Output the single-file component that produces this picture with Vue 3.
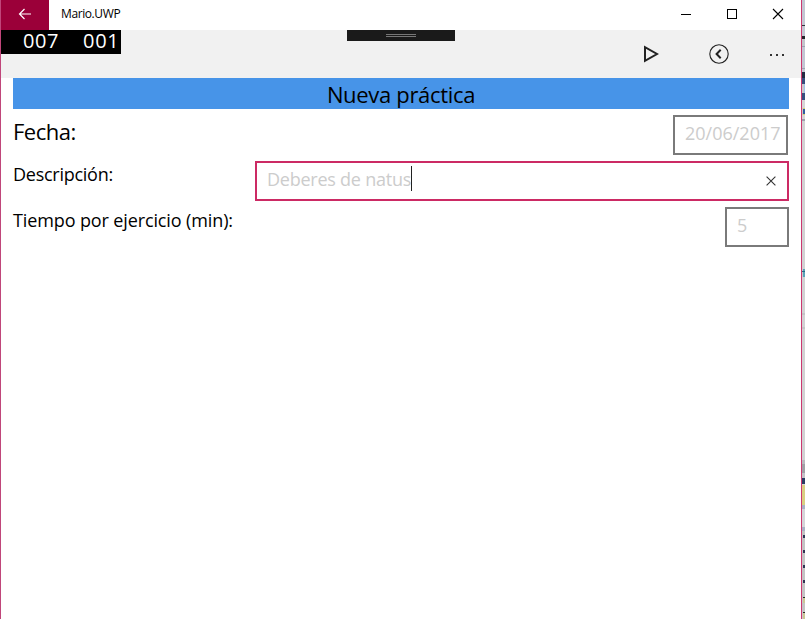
<script setup>
import { ref } from 'vue'

const date = ref('20/06/2017')
const description = ref('Deberes de natus')
const minutes = ref('5')

// Slices of the window lying behind this one: height in px, colour and,
// for marks that do not fill the strip, their left inset in px
const slices = [
  [25, '#c3c6d2'], [1, '#33363c'], [10, '#c3c6d2'], [3, '#24262b'], [7, '#c3c6cc'],
  [1, '#9ea2b0'], [21, '#c3c7d3'], [1, '#9ea2b0'], [3, '#c3c7d3'], [6, '#222c43'],
  [6, '#364e7c'], [9, '#9fc3e8', 2], [7, '#37507f'], [8, '#d6d6d6'], [1, '#d8cf74', 1],
  [5, '#315f9f', 1], [1, '#d8cf74', 1], [4, '#d6d6d6'], [2, '#9da1ad'], [148, '#d2d2d3'],
  [2, '#5aa3b8', 1], [1, '#286b84'], [5, '#5aa3b8', 1], [36, '#d2d2d3'], [2, '#c4c4c6'],
  [12, '#d2d2d3'], [2, '#c4c4c6'], [131, '#d2d2d3'], [4, '#b9b9bd'], [9, '#a0a0a5'],
  [5, '#c3c3c7'], [6, '#2a3c62'], [1, '#d5d5d8'], [20, '#d9cf82'], [4, '#aab0c4'],
  [18, '#d5d5d8'], [4, '#aab0c4'], [4, '#c4c4c4'], [3, '#303554', 1], [12, '#c4c4c4'],
  [3, '#303554', 1], [12, '#c4c4c4'], [3, '#303554', 1], [12, '#c4c4c4'], [3, '#303554', 1],
  [14, '#c4c4c4'], [1, '#292929', 1], [5, '#cbc795', 1], [9, '#c4c4c4'], [1, '#292929', 1],
  [6, '#cbc795', 1],
]
</script>

<template>
  <div class="screen">
    <main class="window">
      <header class="titlebar">
        <button class="back" aria-label="Atrás">
          <svg width="14" height="12" viewBox="0 0 14 12"><path d="M13 6H1.5M6.5 1 1.5 6l5 5" /></svg>
        </button>
        <span class="app-name">Mario.UWP</span>
        <div class="controls">
          <svg width="12" height="12" viewBox="0 0 12 12"><path d="M1 6.5h10" /></svg>
          <svg width="12" height="12" viewBox="0 0 12 12"><path d="M1.5 1.5h9v9h-9z" /></svg>
          <svg class="smooth" width="12" height="12" viewBox="0 0 12 12"><path d="m1 1 10 10M11 1 1 11" /></svg>
        </div>
      </header>

      <nav class="commandbar">
        <div class="counter"><span>007</span><span>001</span></div>
        <div class="grip"><i></i><i></i></div>
        <div class="commands">
          <svg class="play" width="16" height="18" viewBox="0 0 16 18"><path d="M2 2.2v13.6L14 9z" /></svg>
          <svg class="previous" width="20" height="20" viewBox="0 0 20 20">
            <circle cx="10" cy="10" r="9.2" /><path d="M11.7 5.8 7.6 10l4.1 4.2" />
          </svg>
          <div class="more"><i></i><i></i><i></i></div>
        </div>
      </nav>

      <section class="page">
        <h1><span>Nueva práctica</span></h1>
        <div class="row">
          <span class="label large">Fecha:</span>
          <div class="field date"><span>{{ date }}</span></div>
        </div>
        <div class="row">
          <span class="label desc">Descripción:</span>
          <div class="field description">
            <span>{{ description }}</span><i class="caret"></i>
            <svg width="10" height="10" viewBox="0 0 10 10"><path d="m.6.6 8.8 8.8M9.4.6.6 9.4" /></svg>
          </div>
        </div>
        <div class="row">
          <span class="label time">Tiempo por ejercicio (min):</span>
          <div class="field minutes"><span>{{ minutes }}</span></div>
        </div>
      </section>
    </main>
    <aside class="behind">
      <div
        v-for="(s, i) in slices"
        :key="i"
        :style="{ height: s[0] + 'px', background: s[1], marginLeft: (s[2] || 0) + 'px' }"
      ></div>
    </aside>
  </div>
</template>

<style>
body { background: #fff; overflow: hidden; }
</style>

<style scoped>
* { box-sizing: border-box; }
.screen {
  display: flex;
  width: 805px;
  height: 619px;
  overflow: hidden;
  font-family: "Open Sans", "Noto Sans", sans-serif;
  color: #000;
}
.window {
  width: 802px;
  flex: none;
  border-left: 1px solid #c0467a;
  border-right: 1px solid #cc3870;
  background: #fff;
}
.behind { width: 3px; height: 619px; overflow: hidden; background: #c8c8ca; }
svg { display: block; fill: none; flex: none; }

.titlebar { display: flex; height: 30px; align-items: center; }
.back {
  display: flex;
  width: 48px;
  height: 30px;
  padding: 0 0 3px;
  border: 0;
  background: #9b0039;
  align-items: center;
  justify-content: center;
}
.back svg { stroke: #fff; stroke-width: 1.2; }
.app-name { margin: -3px 0 0 12px; font-size: 12px; letter-spacing: -0.4px; }
.controls { display: flex; gap: 34px; margin: -2px 17px 0 auto; }
.controls svg { stroke: #000; stroke-width: 1; shape-rendering: crispEdges; }
.controls .smooth { shape-rendering: auto; stroke-width: 1.1; }

.commandbar {
  display: grid;
  grid-template-columns: 346px 108px 1fr;
  height: 48px;
  background: #f1f1f1;
}
.counter {
  display: flex;
  gap: 24px;
  width: 120px;
  height: 24px;
  padding-left: 22px;
  background: #000;
  color: #fff;
  font-size: 20px;
  line-height: 22px;
  letter-spacing: 0.6px;
}
.grip {
  display: flex;
  flex-direction: column;
  align-items: center;
  gap: 1px;
  height: 11px;
  padding-top: 4px;
  background: #1a1a1a;
}
.grip i { width: 30px; height: 1px; background: #777; }
.commands { display: flex; align-items: center; justify-content: flex-end; padding-right: 17px; }
.commands svg { stroke: #222; }
.play { stroke-width: 2; margin-right: 50px; }
.previous { margin-right: 41px; }
.previous circle { stroke-width: 1.1; }
.previous path { stroke-width: 2; }
.more { display: flex; gap: 4px; padding-top: 2px; }
.more i { width: 2px; height: 2px; background: #333; }

.page { padding: 0 12px; }
h1 {
  height: 31px;
  margin: 0 0 6px;
  background: #4794e8;
  font-size: 22px;
  font-weight: 400;
  line-height: 33px;
  letter-spacing: -0.32px;
  text-align: center;
}
.row { display: flex; justify-content: space-between; height: 40px; margin-bottom: 6px; }
.label { font-size: 18px; line-height: 26px; white-space: nowrap; }
.large { font-size: 22px; line-height: 32px; letter-spacing: -0.5px; }
.desc { letter-spacing: -0.26px; }
.time { letter-spacing: -0.12px; }
.field {
  display: flex;
  height: 40px;
  padding-left: 10px;
  border: 2px solid #7a7a7a;
  background: #fff;
  color: #ccc;
  font-size: 18px;
  line-height: 32px;
  white-space: nowrap;
}
.date { width: 115px; margin-right: 1px; }
.date span { letter-spacing: 0; }
.description { width: 534px; border-color: #cc2a64; }
.description span { letter-spacing: -0.24px; }
.description svg { margin: 13px 11px 0 auto; stroke: #333; stroke-width: 1.1; }
.caret { width: 1px; height: 25px; margin-top: 3px; background: #222; }
.minutes { width: 64px; }
</style>
